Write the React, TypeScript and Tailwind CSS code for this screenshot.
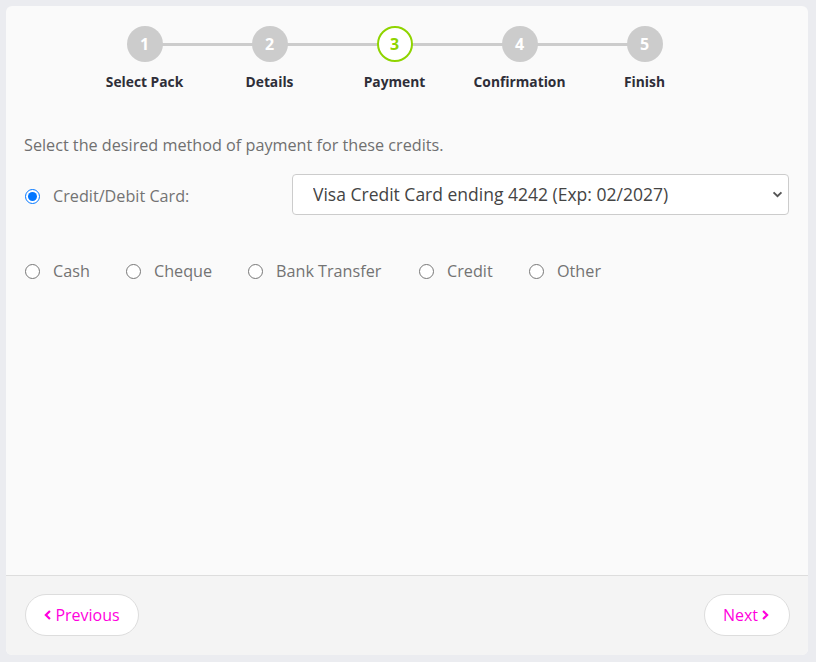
const steps = [
  { n: 1, label: 'Select Pack' },
  { n: 2, label: 'Details' },
  { n: 3, label: 'Payment', active: true },
  { n: 4, label: 'Confirmation' },
  { n: 5, label: 'Finish' },
];

const otherMethods = [
  { label: 'Cash', w: 'w-[101px]' },
  { label: 'Cheque', w: 'w-[122px]' },
  { label: 'Bank Transfer', w: 'w-[171px]' },
  { label: 'Credit', w: 'w-[110px]' },
  { label: 'Other', w: 'w-[80px]' },
];

function Chevron({ dir }: { dir: 'left' | 'right' }) {
  return (
    <svg viewBox="0 0 8 12" className="h-[10px] w-[7px]" fill="none" stroke="currentColor" strokeWidth={2.6} strokeLinecap="square">
      {dir === 'left' ? <polyline points="6,2 2,6 6,10" /> : <polyline points="2,2 6,6 2,10" />}
    </svg>
  );
}

export default function App() {
  return (
    <div className="h-screen bg-[#ebecf0] p-[6px] font-['Open_Sans',sans-serif]">
      <div className="flex h-[649px] w-[802px] flex-col overflow-hidden rounded-[6px] bg-[#fafafa]">
        {/* Stepper */}
        <div className="relative ml-[76px] mt-[20px] flex w-[625px]">
          <div className="absolute left-[62px] right-[62px] top-[17px] h-[3px] bg-[#cccccc]" />
          {steps.map((s) => (
            <div key={s.n} className="relative flex w-[125px] flex-col items-center">
              {s.active ? (
                <div className="flex h-[36px] w-[36px] items-center justify-center rounded-full border-2 border-[#8fd400] bg-white text-[16px] font-bold text-[#8fd400]">
                  {s.n}
                </div>
              ) : (
                <div className="flex h-[36px] w-[36px] items-center justify-center rounded-full bg-[#cccccc] text-[16px] font-bold text-white">
                  {s.n}
                </div>
              )}
              <span className="mt-[10px] text-[13.8px] font-bold leading-[20px] text-[#2e2e38]">{s.label}</span>
            </div>
          ))}
        </div>

        {/* Body */}
        <div className="flex-1 px-[18px] pt-[42px]">
          <p className="text-[16.2px] leading-[22px] text-[#707070]">
            Select the desired method of payment for these credits.
          </p>

          <div className="mt-[18px] flex items-center">
            <label className="flex w-[268px] items-center pl-[1px] pt-[4px]">
              <input type="radio" name="pay" defaultChecked className="m-0 h-[15px] w-[15px] accent-[#0075ff]" />
              <span className="ml-[13px] text-[16.2px] text-[#737373]">Credit/Debit Card:</span>
            </label>
            <div className="relative w-[497px]">
              <select className="h-[41px] w-full appearance-none rounded-[4px] border border-[#cccccc] bg-white pl-[20px] pr-[40px] text-[17.5px] text-[#444444]">
                <option>Visa Credit Card ending 4242 (Exp: 02/2027)</option>
              </select>
              <svg viewBox="0 0 12 8" className="pointer-events-none absolute right-[6px] top-[17px] h-[7px] w-[11px] text-[#555555]" fill="none" stroke="currentColor" strokeWidth={2.2}>
                <polyline points="1.5,1.5 6,6 10.5,1.5" />
              </svg>
            </div>
          </div>

          <div className="mt-[44px] flex items-center pl-[1px]">
            {otherMethods.map((m) => (
              <label key={m.label} className={`flex items-center ${m.w}`}>
                <input type="radio" name="pay" className="m-0 h-[15px] w-[15px]" />
                <span className="ml-[13px] text-[16.2px] text-[#737373]">{m.label}</span>
              </label>
            ))}
          </div>
        </div>

        {/* Footer */}
        <div className="flex h-[80px] items-start justify-between border-t border-[#dddddd] bg-[#f4f4f4] pl-[19px] pr-[18px] pt-[18px]">
          <button className="flex h-[42px] w-[114px] items-center justify-center gap-[4px] rounded-full border border-[#dddddd] bg-white text-[16px] text-[#ff00dd]">
            <Chevron dir="left" />
            Previous
          </button>
          <button className="flex h-[42px] w-[86px] items-center justify-center gap-[4px] rounded-full border border-[#dddddd] bg-white pr-[2px] text-[16px] text-[#ff00dd]">
            Next
            <Chevron dir="right" />
          </button>
        </div>
      </div>
    </div>
  );
}
